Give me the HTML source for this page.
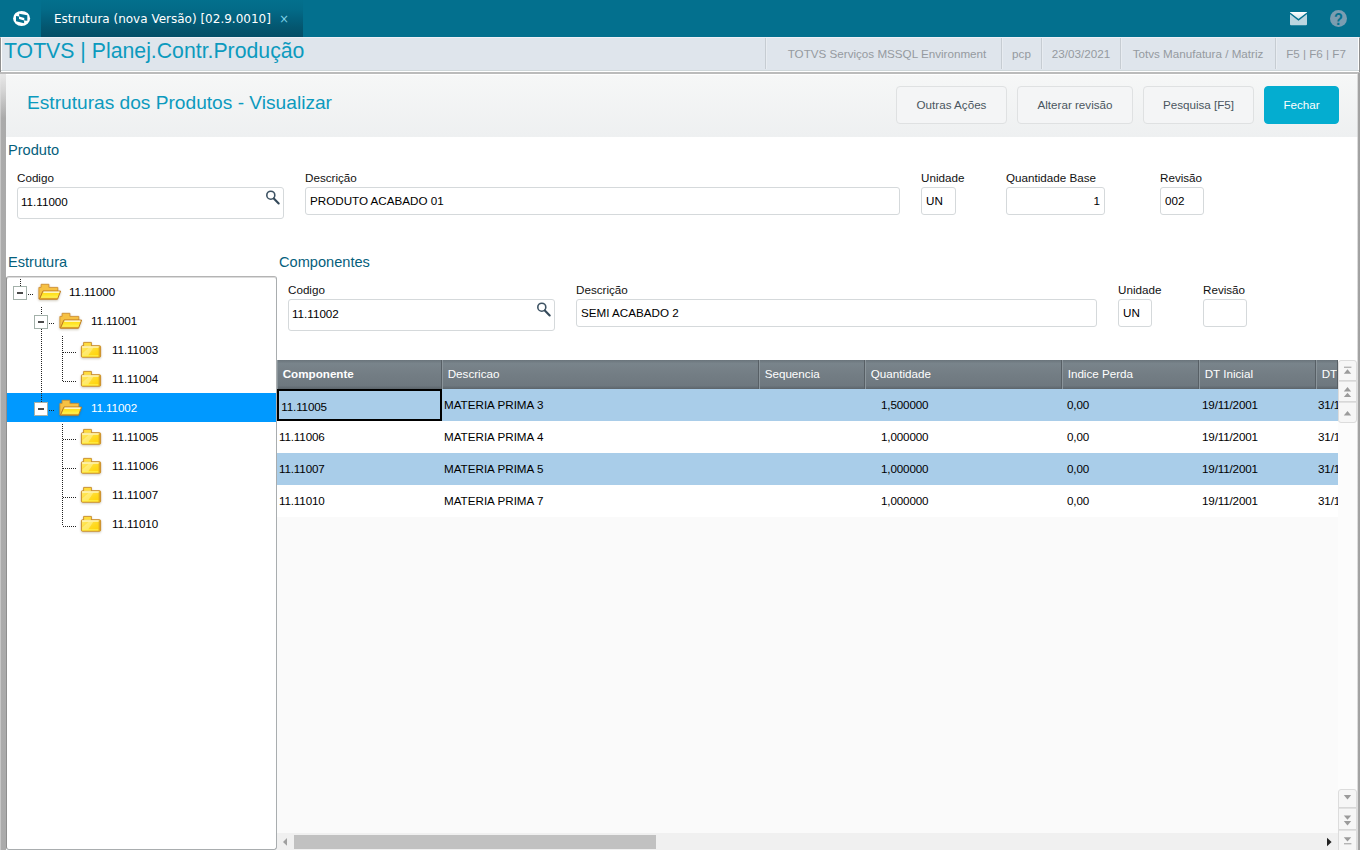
<!DOCTYPE html>
<html lang="pt-BR">
<head>
<meta charset="utf-8">
<title>Estrutura (nova Versão) [02.9.0010]</title>
<style>
*{box-sizing:border-box;margin:0;padding:0}
html,body{width:1360px;height:850px;overflow:hidden;background:#fff}
body{font-family:"Liberation Sans",sans-serif;font-size:12px;color:#000;position:relative}
.abs{position:absolute}
/* top bar */
#topbar{left:0;top:0;width:1360px;height:37px;background:#03708e}
#tab{left:41px;top:0;width:262px;height:37px;background:linear-gradient(#03708d 0%,#036b88 25%,#03607c 50%,#04566f 75%,#044e67 100%)}
#tabtxt{left:54px;top:11px;font-family:"DejaVu Sans","Liberation Sans",sans-serif;font-size:12px;color:#fff;white-space:nowrap;line-height:16px}
#tabx{left:279.2px;top:11.3px;font-family:"DejaVu Sans",sans-serif;font-size:11.5px;color:#7fd3e8;line-height:16px}
/* status bar */
#status{left:0;top:37px;width:1360px;height:35px;background:#dfe5ec;border-left:1px solid #8f8f8f;border-right:1px solid #8f8f8f;border-top:1px solid #eef0f7;box-shadow:inset 0 -1px 0 #fff,inset 0 -2px 0 #cfd7da,inset 1px 0 0 #fff,inset -1px 0 0 #fff}
#statusline{left:0;top:72px;width:1360px;height:2px;background:#bbb}
#apptitle{left:4px;top:39px;font-size:21.25px;line-height:24px;color:#0c9abe;white-space:nowrap}
.sb{top:38px;height:31px;line-height:32px;font-size:11.65px;color:#959aa0;text-align:center;border-left:1px solid #c6ccd2;box-shadow:inset 1px 0 0 #e8ecf1;white-space:nowrap}
/* header */
#header{left:6px;top:75px;width:1352px;height:62px;background:linear-gradient(#f6f7f7,#eef0f1)}
#lshadow{left:0;top:74px;width:6px;height:776px;background:linear-gradient(90deg,#c6c6c6 0,#c6c6c6 1px,#ababab 1px,#aaa 6px)}
#h1{left:27px;top:92px;font-size:19.15px;line-height:22px;color:#0c9abe;white-space:nowrap}
.btn{top:86px;height:38px;border:1px solid #dfe1e2;border-radius:4px;background:#f4f5f6;color:#4a5560;font-size:11.65px;line-height:36px;text-align:center;white-space:nowrap}
.btn.pri{background:#04add0;border-color:#04add0;color:#fff}
/* form */
.sec{font-size:14.6px;line-height:16px;color:#05607c;white-space:nowrap}
.lbl{font-size:11.65px;line-height:14px;color:#111;white-space:nowrap}
.inp{border:1px solid #d5d9db;border-radius:3px;background:#fff;font-size:11.65px;line-height:14px;color:#000;white-space:nowrap;padding:0 4px}
/* tree */
#tree{left:6px;top:276px;width:271px;height:574px;background:#fff;border:1px solid #a9adaf;border-top-color:#b4b4b4;border-left-color:#8e8e8e;border-radius:3px;box-shadow:inset 0 1px 0 #dcdcdc}
.tn{font-size:11.65px;line-height:14px;color:#000;white-space:nowrap}
.tbox{width:14px;height:14px;background:#fff;border:1px solid #a3b1aa}
.tbox i{position:absolute;left:3px;top:5px;width:6px;height:2px;background:#4a4a4a}
.fi{filter:drop-shadow(0 1px 1px rgba(90,70,20,.3))}
.hd{height:1px;background:repeating-linear-gradient(90deg,#222 0,#222 1px,transparent 1px,transparent 2px)}
.vd{width:1px;background:repeating-linear-gradient(180deg,#222 0,#222 1px,transparent 1px,transparent 2px)}
/* grid */
#gridbg{left:277px;top:360px;width:1061px;height:473px;background:#fafafa}
.gh{top:360px;height:29px;background:linear-gradient(#6a747b 0%,#79848b 12%,#737d84 50%,#6e787f 88%,#5c656b 100%);border-left:1px solid #8b959b;border-right:1px solid #575f65;color:#fff;font-size:11.65px;line-height:28px;padding-left:4.7px;white-space:nowrap;overflow:hidden}
.row{left:277px;width:1061px;height:32px}
.row.b{background:#a9cde9}
.row.w{background:#fff}
.sbtn{width:19px;background:#f6f6f6;border:1px solid #dcdcdc;border-radius:3px}
.ssep{width:17px;height:2px;background:linear-gradient(#d2d2d2,#e6e6e6)}
.n{letter-spacing:-0.15px}
.c{margin-top:.5px;font-size:11.65px;line-height:14px;color:#000;white-space:nowrap}
</style>
</head>
<body>
<!-- TOP BAR -->
<div id="topbar" class="abs"></div>
<div id="tab" class="abs"></div>
<svg class="abs" style="left:11px;top:9px" width="22" height="20" viewBox="0 0 22 20"><ellipse cx="10.6" cy="9.4" rx="8.5" ry="7.5" fill="#fff"/><path d="M8.2 4.7 L16.3 6.3 L16.3 11.8 L13.3 11.4 L13.3 9 L8.2 7.4Z" fill="#04718f"/><path d="M5 7 L8 7.4 L8 10 L13.1 11.6 L13.1 14.3 L5 12.3Z" fill="#04718f"/></svg>
<div id="tabtxt" class="abs">Estrutura (nova Versão) [02.9.0010]</div>
<div id="tabx" class="abs">×</div>
<svg class="abs" style="left:1289px;top:11px" width="20" height="16" viewBox="0 0 20 16"><rect x="1" y="1" width="17" height="13.2" rx="1" fill="#bcd6e0"/><linearGradient id="gmf" x1="0" y1="0" x2="0" y2="1"><stop offset="0" stop-color="#ffffff"/><stop offset="1" stop-color="#cfe2ea"/></linearGradient><path d="M1.3 1 L17.7 1 L17.7 2 L9.5 8.2 L1.3 2Z" fill="url(#gmf)"/><path d="M1 2.2 L9.5 8.8 L18 2.2" fill="none" stroke="#03708e" stroke-width="1.4"/></svg>
<svg class="abs" style="left:1329px;top:9px" width="20" height="20" viewBox="0 0 20 20"><circle cx="9.5" cy="9.4" r="8.5" fill="#7b9db1"/><text x="9.5" y="15.6" text-anchor="middle" transform="translate(9.5 0) scale(.88 1) translate(-9.5 0)" font-family="Liberation Sans, sans-serif" font-weight="bold" font-size="16.6" fill="#04718f">?</text></svg>

<!-- STATUS BAR -->
<div id="status" class="abs"></div>
<div id="statusline" class="abs"></div>
<div id="apptitle" class="abs">TOTVS | Planej.Contr.Produção</div>
<div class="abs sb" style="left:765px;width:236px;padding-left:7px">TOTVS Serviços MSSQL Environment</div>
<div class="abs sb" style="left:1001px;width:40px">pcp</div>
<div class="abs sb" style="left:1041px;width:79px">23/03/2021</div>
<div class="abs sb" style="left:1120px;width:155px">Totvs Manufatura / Matriz</div>
<div class="abs sb" style="left:1275px;width:81px">F5 | F6 | F7</div>

<!-- HEADER -->
<div id="lshadow" class="abs"></div>
<div class="abs" style="left:0;top:74px;width:6px;height:44px;background:linear-gradient(rgba(235,235,235,.95) 0,rgba(225,225,225,.8) 35%,rgba(220,220,220,0) 100%)"></div>
<div id="header" class="abs"></div>
<div id="h1" class="abs">Estruturas dos Produtos - Visualizar</div>
<div class="abs btn" style="left:896px;width:111px">Outras Ações</div>
<div class="abs btn" style="left:1017px;width:116px">Alterar revisão</div>
<div class="abs btn" style="left:1143px;width:111px">Pesquisa [F5]</div>
<div class="abs btn pri" style="left:1264px;width:75px">Fechar</div>

<!-- PRODUTO -->
<div class="abs sec" style="left:8px;top:142px">Produto</div>
<div class="abs lbl" style="left:17px;top:171px">Codigo</div>
<div class="abs inp" style="left:17px;top:187px;width:267px;height:32px;padding-top:7px;padding-left:3px">11.11000</div>
<svg class="abs" style="left:265px;top:189px" width="16" height="18" viewBox="0 0 16 18"><circle cx="5.8" cy="6.2" r="4" fill="none" stroke="#3d5263" stroke-width="1.6"/><path d="M8.8 9.4 L13.7 14.5" stroke="#34495a" stroke-width="2.1" stroke-linecap="round"/></svg>
<div class="abs lbl" style="left:305px;top:171px">Descrição</div>
<div class="abs inp" style="left:305px;top:187px;width:595px;height:28px;padding-top:6px">PRODUTO ACABADO 01</div>
<div class="abs lbl" style="left:921px;top:171px">Unidade</div>
<div class="abs inp" style="left:921px;top:187px;width:35px;height:28px;padding-top:6px">UN</div>
<div class="abs lbl" style="left:1006px;top:171px">Quantidade Base</div>
<div class="abs inp" style="left:1006px;top:187px;width:99px;height:28px;padding-top:6px;text-align:right">1</div>
<div class="abs lbl" style="left:1160px;top:171px">Revisão</div>
<div class="abs inp" style="left:1160px;top:187px;width:44px;height:28px;padding-top:6px">002</div>

<!-- ESTRUTURA -->
<div class="abs sec" style="left:8px;top:254px">Estrutura</div>
<div id="tree" class="abs"></div>
<!--TREE-BEGIN-->
<svg width="0" height="0" style="position:absolute"><defs><linearGradient id="gfo" x1="0" y1="0" x2="0" y2="1"><stop offset="0" stop-color="#fff8b0"/><stop offset=".3" stop-color="#ffe01c"/><stop offset=".6" stop-color="#ffea38"/><stop offset=".85" stop-color="#fff65c"/><stop offset="1" stop-color="#f2c02c"/></linearGradient><linearGradient id="gfc" x1="0" y1="0" x2="1" y2="1"><stop offset="0" stop-color="#ffeb70"/><stop offset=".6" stop-color="#ffd91e"/><stop offset="1" stop-color="#ffd000"/></linearGradient></defs></svg>
<div class="abs tbox" style="left:13px;top:286px"><i></i></div>
<div class="abs hd" style="left:28px;top:294px;width:6px"></div>
<svg class="abs fi" style="left:38px;top:283px" width="24" height="18" viewBox="0 0 24 18"><path d="M0.9 16 L0.9 4.4 L3.1 4.4 L3.1 1.3 L10.9 1.3 L10.9 4.4 L19.8 4.4 L19.8 8.2 L5 8.2 L1.6 16Z" fill="#f6c143" stroke="#cf9033" stroke-width="0.9" stroke-linejoin="round"/><path d="M1.5 16.2 L4.9 8.1 L22.6 8.1 L19.5 16.2Z" fill="url(#gfo)" stroke="#bf7a1e" stroke-width="1" stroke-linejoin="round"/><path d="M5.6 9.1 L21.3 9.1" stroke="#fffdf0" stroke-width="1.1"/><path d="M2.6 15.4 L19 15.4" stroke="#d9971f" stroke-width="0.9"/></svg>
<div class="abs tn" style="left:69px;top:285px;letter-spacing:-0.1px">11.11000</div>
<div class="abs tbox" style="left:34px;top:315px"><i></i></div>
<div class="abs hd" style="left:49px;top:323px;width:6px"></div>
<svg class="abs fi" style="left:59px;top:312px" width="24" height="18" viewBox="0 0 24 18"><path d="M0.9 16 L0.9 4.4 L3.1 4.4 L3.1 1.3 L10.9 1.3 L10.9 4.4 L19.8 4.4 L19.8 8.2 L5 8.2 L1.6 16Z" fill="#f6c143" stroke="#cf9033" stroke-width="0.9" stroke-linejoin="round"/><path d="M1.5 16.2 L4.9 8.1 L22.6 8.1 L19.5 16.2Z" fill="url(#gfo)" stroke="#bf7a1e" stroke-width="1" stroke-linejoin="round"/><path d="M5.6 9.1 L21.3 9.1" stroke="#fffdf0" stroke-width="1.1"/><path d="M2.6 15.4 L19 15.4" stroke="#d9971f" stroke-width="0.9"/></svg>
<div class="abs tn" style="left:91px;top:314px;letter-spacing:-0.1px">11.11001</div>
<div class="abs hd" style="left:63px;top:352px;width:14px"></div>
<svg class="abs fi" style="left:80px;top:341px" width="22" height="18" viewBox="0 0 22 18"><path d="M3.6 5.4 L3.6 1.4 L11.4 1.4 L11.4 5.4Z" fill="#ffdc3c" stroke="#cc9436" stroke-width="1"/><rect x="1.4" y="4.7" width="19.2" height="11.5" rx="1" fill="url(#gfc)" stroke="#c98c2e" stroke-width="1"/><path d="M4.1 4.7 L10.9 4.7" stroke="#ffe45a" stroke-width="1.1"/><path d="M2.2 6 L19 6" stroke="#fffbe6" stroke-width="1.1"/><path d="M2.2 14.7 L8 14.7 L13.6 6.6 L9 6.6 L2.2 12.6Z" fill="#fff6a8" opacity=".5"/><path d="M2.2 14.9 L18.6 14.9" stroke="#fff75a" stroke-width="1"/><rect x="18.7" y="5.4" width="1.4" height="10.2" fill="#d9a024" opacity=".85"/></svg>
<div class="abs tn" style="left:112px;top:343px;letter-spacing:-0.1px">11.11003</div>
<div class="abs hd" style="left:63px;top:381px;width:14px"></div>
<svg class="abs fi" style="left:80px;top:370px" width="22" height="18" viewBox="0 0 22 18"><path d="M3.6 5.4 L3.6 1.4 L11.4 1.4 L11.4 5.4Z" fill="#ffdc3c" stroke="#cc9436" stroke-width="1"/><rect x="1.4" y="4.7" width="19.2" height="11.5" rx="1" fill="url(#gfc)" stroke="#c98c2e" stroke-width="1"/><path d="M4.1 4.7 L10.9 4.7" stroke="#ffe45a" stroke-width="1.1"/><path d="M2.2 6 L19 6" stroke="#fffbe6" stroke-width="1.1"/><path d="M2.2 14.7 L8 14.7 L13.6 6.6 L9 6.6 L2.2 12.6Z" fill="#fff6a8" opacity=".5"/><path d="M2.2 14.9 L18.6 14.9" stroke="#fff75a" stroke-width="1"/><rect x="18.7" y="5.4" width="1.4" height="10.2" fill="#d9a024" opacity=".85"/></svg>
<div class="abs tn" style="left:112px;top:372px;letter-spacing:-0.1px">11.11004</div>
<div class="abs" style="left:7px;top:393px;width:269px;height:29px;background:#0099ff"></div>
<div class="abs tbox" style="left:34px;top:402px"><i></i></div>
<div class="abs hd" style="left:49px;top:410px;width:6px"></div>
<svg class="abs fi" style="left:59px;top:399px" width="24" height="18" viewBox="0 0 24 18"><path d="M0.9 16 L0.9 4.4 L3.1 4.4 L3.1 1.3 L10.9 1.3 L10.9 4.4 L19.8 4.4 L19.8 8.2 L5 8.2 L1.6 16Z" fill="#f6c143" stroke="#cf9033" stroke-width="0.9" stroke-linejoin="round"/><path d="M1.5 16.2 L4.9 8.1 L22.6 8.1 L19.5 16.2Z" fill="url(#gfo)" stroke="#bf7a1e" stroke-width="1" stroke-linejoin="round"/><path d="M5.6 9.1 L21.3 9.1" stroke="#fffdf0" stroke-width="1.1"/><path d="M2.6 15.4 L19 15.4" stroke="#d9971f" stroke-width="0.9"/></svg>
<div class="abs tn" style="left:91px;top:401px;letter-spacing:-0.1px;color:#fff">11.11002</div>
<div class="abs hd" style="left:63px;top:439px;width:14px"></div>
<svg class="abs fi" style="left:80px;top:428px" width="22" height="18" viewBox="0 0 22 18"><path d="M3.6 5.4 L3.6 1.4 L11.4 1.4 L11.4 5.4Z" fill="#ffdc3c" stroke="#cc9436" stroke-width="1"/><rect x="1.4" y="4.7" width="19.2" height="11.5" rx="1" fill="url(#gfc)" stroke="#c98c2e" stroke-width="1"/><path d="M4.1 4.7 L10.9 4.7" stroke="#ffe45a" stroke-width="1.1"/><path d="M2.2 6 L19 6" stroke="#fffbe6" stroke-width="1.1"/><path d="M2.2 14.7 L8 14.7 L13.6 6.6 L9 6.6 L2.2 12.6Z" fill="#fff6a8" opacity=".5"/><path d="M2.2 14.9 L18.6 14.9" stroke="#fff75a" stroke-width="1"/><rect x="18.7" y="5.4" width="1.4" height="10.2" fill="#d9a024" opacity=".85"/></svg>
<div class="abs tn" style="left:112px;top:430px;letter-spacing:-0.1px">11.11005</div>
<div class="abs hd" style="left:63px;top:468px;width:14px"></div>
<svg class="abs fi" style="left:80px;top:457px" width="22" height="18" viewBox="0 0 22 18"><path d="M3.6 5.4 L3.6 1.4 L11.4 1.4 L11.4 5.4Z" fill="#ffdc3c" stroke="#cc9436" stroke-width="1"/><rect x="1.4" y="4.7" width="19.2" height="11.5" rx="1" fill="url(#gfc)" stroke="#c98c2e" stroke-width="1"/><path d="M4.1 4.7 L10.9 4.7" stroke="#ffe45a" stroke-width="1.1"/><path d="M2.2 6 L19 6" stroke="#fffbe6" stroke-width="1.1"/><path d="M2.2 14.7 L8 14.7 L13.6 6.6 L9 6.6 L2.2 12.6Z" fill="#fff6a8" opacity=".5"/><path d="M2.2 14.9 L18.6 14.9" stroke="#fff75a" stroke-width="1"/><rect x="18.7" y="5.4" width="1.4" height="10.2" fill="#d9a024" opacity=".85"/></svg>
<div class="abs tn" style="left:112px;top:459px;letter-spacing:-0.1px">11.11006</div>
<div class="abs hd" style="left:63px;top:497px;width:14px"></div>
<svg class="abs fi" style="left:80px;top:486px" width="22" height="18" viewBox="0 0 22 18"><path d="M3.6 5.4 L3.6 1.4 L11.4 1.4 L11.4 5.4Z" fill="#ffdc3c" stroke="#cc9436" stroke-width="1"/><rect x="1.4" y="4.7" width="19.2" height="11.5" rx="1" fill="url(#gfc)" stroke="#c98c2e" stroke-width="1"/><path d="M4.1 4.7 L10.9 4.7" stroke="#ffe45a" stroke-width="1.1"/><path d="M2.2 6 L19 6" stroke="#fffbe6" stroke-width="1.1"/><path d="M2.2 14.7 L8 14.7 L13.6 6.6 L9 6.6 L2.2 12.6Z" fill="#fff6a8" opacity=".5"/><path d="M2.2 14.9 L18.6 14.9" stroke="#fff75a" stroke-width="1"/><rect x="18.7" y="5.4" width="1.4" height="10.2" fill="#d9a024" opacity=".85"/></svg>
<div class="abs tn" style="left:112px;top:488px;letter-spacing:-0.1px">11.11007</div>
<div class="abs hd" style="left:63px;top:526px;width:14px"></div>
<svg class="abs fi" style="left:80px;top:515px" width="22" height="18" viewBox="0 0 22 18"><path d="M3.6 5.4 L3.6 1.4 L11.4 1.4 L11.4 5.4Z" fill="#ffdc3c" stroke="#cc9436" stroke-width="1"/><rect x="1.4" y="4.7" width="19.2" height="11.5" rx="1" fill="url(#gfc)" stroke="#c98c2e" stroke-width="1"/><path d="M4.1 4.7 L10.9 4.7" stroke="#ffe45a" stroke-width="1.1"/><path d="M2.2 6 L19 6" stroke="#fffbe6" stroke-width="1.1"/><path d="M2.2 14.7 L8 14.7 L13.6 6.6 L9 6.6 L2.2 12.6Z" fill="#fff6a8" opacity=".5"/><path d="M2.2 14.9 L18.6 14.9" stroke="#fff75a" stroke-width="1"/><rect x="18.7" y="5.4" width="1.4" height="10.2" fill="#d9a024" opacity=".85"/></svg>
<div class="abs tn" style="left:112px;top:517px;letter-spacing:-0.1px">11.11010</div>
<div class="abs vd" style="left:20px;top:279px;height:7px"></div>
<div class="abs vd" style="left:41px;top:307px;height:8px"></div>
<div class="abs vd" style="left:41px;top:329px;height:73px"></div>
<div class="abs vd" style="left:62px;top:336px;height:46px"></div>
<div class="abs vd" style="left:62px;top:424px;height:102px"></div>
<!--TREE-END-->

<!-- COMPONENTES -->
<div class="abs sec" style="left:279px;top:254px">Componentes</div>
<div class="abs lbl" style="left:288px;top:283px">Codigo</div>
<div class="abs inp" style="left:288px;top:299px;width:267px;height:32px;padding-top:7px;padding-left:3px">11.11002</div>
<svg class="abs" style="left:536px;top:301px" width="16" height="18" viewBox="0 0 16 18"><circle cx="5.8" cy="6.2" r="4" fill="none" stroke="#3d5263" stroke-width="1.6"/><path d="M8.8 9.4 L13.7 14.5" stroke="#34495a" stroke-width="2.1" stroke-linecap="round"/></svg>
<div class="abs lbl" style="left:576px;top:283px">Descrição</div>
<div class="abs inp" style="left:576px;top:299px;width:521px;height:28px;padding-top:6px">SEMI ACABADO 2</div>
<div class="abs lbl" style="left:1118px;top:283px">Unidade</div>
<div class="abs inp" style="left:1118px;top:299px;width:34px;height:28px;padding-top:6px">UN</div>
<div class="abs lbl" style="left:1203px;top:283px">Revisão</div>
<div class="abs inp" style="left:1203px;top:299px;width:44px;height:28px;padding-top:6px"></div>

<!-- GRID -->
<div id="gridbg" class="abs"></div>
<!--GRID-BEGIN-->
<div class="abs row b" style="top:389px"></div>
<div class="abs" style="left:277px;top:389px;width:165px;height:32px;border:2px solid #000"></div>
<div class="abs c n" style="left:281.3px;top:399.5px">11.11005</div>
<div class="abs c" style="left:444px;top:397px">MATERIA PRIMA 3</div>
<div class="abs c n" style="left:881px;top:397px">1,500000</div>
<div class="abs c n" style="left:1067px;top:397px">0,00</div>
<div class="abs c n" style="left:1202px;top:397px">19/11/2001</div>
<div class="abs c n" style="left:1318px;top:397px;width:20px;overflow:hidden">31/12/2049</div>
<div class="abs row w" style="top:421px"></div>
<div class="abs c n" style="left:279px;top:429px">11.11006</div>
<div class="abs c" style="left:444px;top:429px">MATERIA PRIMA 4</div>
<div class="abs c n" style="left:881px;top:429px">1,000000</div>
<div class="abs c n" style="left:1067px;top:429px">0,00</div>
<div class="abs c n" style="left:1202px;top:429px">19/11/2001</div>
<div class="abs c n" style="left:1318px;top:429px;width:20px;overflow:hidden">31/12/2049</div>
<div class="abs row b" style="top:453px"></div>
<div class="abs c n" style="left:279px;top:461px">11.11007</div>
<div class="abs c" style="left:444px;top:461px">MATERIA PRIMA 5</div>
<div class="abs c n" style="left:881px;top:461px">1,000000</div>
<div class="abs c n" style="left:1067px;top:461px">0,00</div>
<div class="abs c n" style="left:1202px;top:461px">19/11/2001</div>
<div class="abs c n" style="left:1318px;top:461px;width:20px;overflow:hidden">31/12/2049</div>
<div class="abs row w" style="top:485px"></div>
<div class="abs c n" style="left:279px;top:493px">11.11010</div>
<div class="abs c" style="left:444px;top:493px">MATERIA PRIMA 7</div>
<div class="abs c n" style="left:881px;top:493px">1,000000</div>
<div class="abs c n" style="left:1067px;top:493px">0,00</div>
<div class="abs c n" style="left:1202px;top:493px">19/11/2001</div>
<div class="abs c n" style="left:1318px;top:493px;width:20px;overflow:hidden">31/12/2049</div>
<div class="abs gh" style="left:277px;width:165px;font-weight:bold">Componente</div>
<div class="abs gh" style="left:442px;width:317px">Descricao</div>
<div class="abs gh" style="left:759px;width:106px">Sequencia</div>
<div class="abs gh" style="left:865px;width:197px">Quantidade</div>
<div class="abs gh" style="left:1062px;width:137px">Indice Perda</div>
<div class="abs gh" style="left:1199px;width:117px">DT Inicial</div>
<div class="abs gh" style="left:1316px;width:22px">DT</div>
<!--GRID-END-->
<!--SCROLL-BEGIN-->
<div class="abs" style="left:1338px;top:360px;width:19px;height:490px;background:#fcfcfc"></div>
<div class="abs sbtn" style="left:1338px;top:360px;height:63px"></div>
<div class="abs ssep" style="left:1339px;top:380px"></div>
<div class="abs ssep" style="left:1339px;top:401px"></div>
<div class="abs sbtn" style="left:1338px;top:789px;height:64px"></div>
<div class="abs ssep" style="left:1339px;top:807px"></div>
<div class="abs ssep" style="left:1339px;top:829px"></div>
<svg class="abs" style="left:1338px;top:360px" width="19" height="21" viewBox="0 0 19 21"><rect x="6" y="6.7" width="7.4" height="1" fill="#9b9b9b"/><path d="M5.8 13.7 L9.5 9.3 L13.2 13.7Z" fill="#9b9b9b"/></svg>
<svg class="abs" style="left:1338px;top:381px" width="19" height="21" viewBox="0 0 19 21"><path d="M5.8 10.5 L9.5 6.1000000000000005 L13.2 10.5Z" fill="#9b9b9b"/><path d="M5.8 16.1 L9.5 11.7 L13.2 16.1Z" fill="#9b9b9b"/></svg>
<svg class="abs" style="left:1338px;top:402px" width="19" height="21" viewBox="0 0 19 21"><path d="M5.8 13.5 L9.5 9.100000000000001 L13.2 13.5Z" fill="#9b9b9b"/></svg>
<svg class="abs" style="left:1338px;top:789px" width="19" height="19" viewBox="0 0 19 19"><path d="M5.8 5.999999999999999 L9.5 10.399999999999999 L13.2 5.999999999999999Z" fill="#9b9b9b"/></svg>
<svg class="abs" style="left:1338px;top:808px" width="19" height="22" viewBox="0 0 19 22"><path d="M5.8 7.3999999999999995 L9.5 11.8 L13.2 7.3999999999999995Z" fill="#9b9b9b"/><path d="M5.8 13.0 L9.5 17.4 L13.2 13.0Z" fill="#9b9b9b"/></svg>
<svg class="abs" style="left:1338px;top:830px" width="19" height="20" viewBox="0 0 19 20"><path d="M5.8 7.2 L9.5 11.600000000000001 L13.2 7.2Z" fill="#9b9b9b"/><rect x="6" y="13.3" width="7.4" height="1" fill="#9b9b9b"/></svg>
<div class="abs" style="left:277px;top:833px;width:1061px;height:17px;background:#f0f0f0"></div>
<div class="abs" style="left:294px;top:835px;width:362px;height:14px;background:#c1c1c1"></div>
<svg class="abs" style="left:281px;top:837px" width="8" height="10" viewBox="0 0 8 10"><path d="M6 1 L2 4.9 L6 8.8Z" fill="#a0a0a0"/></svg>
<svg class="abs" style="left:1326px;top:837px" width="8" height="10" viewBox="0 0 8 10"><path d="M1 0.8 L5.6 5 L1 9.2Z" fill="#222"/></svg>
<div class="abs" style="left:1357px;top:73px;width:3px;height:777px;background:linear-gradient(90deg,rgba(200,200,200,0) 0,#c8c8c8 0.8px,#a4a4a4 1.4px,#a0a0a0 3px)"></div>
<!--SCROLL-END-->
</body>
</html>
